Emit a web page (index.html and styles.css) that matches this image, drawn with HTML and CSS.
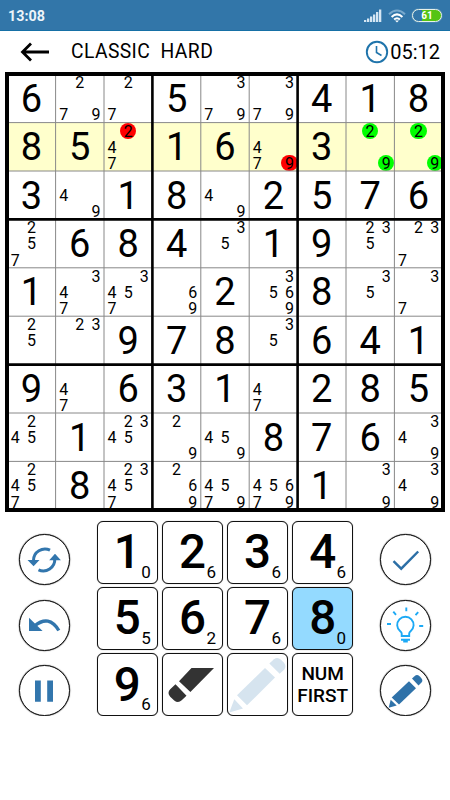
FILE: index.html
```html
<!DOCTYPE html>
<html lang="en">
<head>
  <meta charset="UTF-8">
  <title>Sudoku</title>
  <link rel="stylesheet" href="styles.css">
</head>
<body>
  <div class="status-bar">
    <span>13:08</span>
    <div class="status-icons">
      <svg class="signal" width="18" height="13" viewBox="0 0 18 13" fill="#d5e6f3">
        <path d="M0 11h2.300v2H0zM3 9.500h2.300V13H3zM6 7.500h2.300V13H6zM9 5.500h2.300V13H9zM12 3h2.300v10H12zM15 0.500h2.300V13H15z"/>
      </svg>
      <svg class="wifi" width="18" height="14" viewBox="0 0 18 14" fill="none" stroke-width="2">
        <path d="M1 5.200Q9-2.200 17 5.200" stroke="#79a9cd"/>
        <path d="M3.600 8Q9 2.800 14.400 8" stroke="#fff"/>
        <path d="M6.100 10.600Q9 8 11.900 10.600" stroke="#fff"/>
        <path d="M7 11.500h4L9 13.600z" fill="#fff" stroke="none"/>
      </svg>
      <div class="battery">61</div>
    </div>
  </div>

  <div class="header">
    <svg class="back" width="30" height="20" viewBox="0 0 30 20" fill="none" stroke="#000" stroke-width="2.800">
      <path d="M11 1.500L2.500 10l8.500 8.500M2.500 10H29"/>
    </svg>
    <h1>CLASSIC&nbsp; HARD</h1>
    <div class="timer">
      <svg width="24" height="24" viewBox="0 0 24 24" fill="none" stroke="#1f74ab">
        <circle cx="12" cy="12" r="10.200" stroke-width="1.900"/>
        <path d="M11.500 6v6.500l5 3" stroke-width="1.600"/>
      </svg>
      <span>05:12</span>
    </div>
  </div>

  <div class="board">
    <div class="cells" id="cells"></div>
    <svg class="lines" width="440" height="440" viewBox="0 0 440 440" fill="none" stroke="#000">
      <path stroke="#888" d="M50.600 2v436M99 2v436M195.800 2v436M244.200 2v436M341 2v436M389.400 2v436M2 50.600h436M2 99h436M2 195.800h436M2 244.200h436M2 341h436M2 389.400h436"/>
      <path stroke-width="2.600" d="M147.400 2v436M292.600 2v436M2 147.400h436M2 292.600h436"/>
      <rect x="2" y="2" width="436" height="436" stroke-width="4"/>
    </svg>
  </div>

  <div class="controls">
    <div class="side">
      <button class="round" aria-label="Restart">
        <svg width="50" height="50" viewBox="0 0 50 50">
          <g fill="none" stroke="#3276ad" stroke-width="3">
            <path d="M31 15.200A11.500 11.500 0 0 0 14.500 25.500"/>
            <path d="M19.500 34.800A11.500 11.500 0 0 0 35.800 24"/>
          </g>
          <path fill="#3276ad" d="M8.500 25h12l-5.900 6.200zM30.200 25.200h11.700L36 18.800z"/>
        </svg>
      </button>
      <button class="round" aria-label="Undo">
        <svg width="50" height="50" viewBox="0 0 50 50">
          <path d="M15.500 26Q30 14 39.800 30.500" fill="none" stroke="#3276ad" stroke-width="3.400"/>
          <path fill="#3276ad" d="M10 17.700V31h13.600z"/>
        </svg>
      </button>
      <button class="round" aria-label="Pause">
        <svg width="50" height="50" viewBox="0 0 50 50" fill="#3276ad">
          <path d="M16 14.500h5.800v21.200H16zM28.200 14.500H34v21.200h-5.800z"/>
        </svg>
      </button>
    </div>

    <div class="keypad">
      <button class="key">1<small>0</small></button>
      <button class="key">2<small>6</small></button>
      <button class="key">3<small>6</small></button>
      <button class="key">4<small>6</small></button>
      <button class="key">5<small>5</small></button>
      <button class="key">6<small>2</small></button>
      <button class="key">7<small>6</small></button>
      <button class="key selected">8<small>0</small></button>
      <button class="key">9<small>6</small></button>
      <button class="key" aria-label="Eraser">
        <svg width="61" height="62" viewBox="0 0 61 62" fill="#333">
          <path d="M29.500 14H52L28.400 38 17 27.200zM13.500 30.200l11 11.500-4.800 4.600q-3.500 3.300-7.500.200l-4-3.800q-3.400-3.800 0-7.400z"/>
        </svg>
      </button>
      <button class="key" aria-label="Notes off">
        <svg width="61" height="62" viewBox="0 0 61 62" fill="#d6e4ef">
          <path d="M38 14l10 9.600L20 51.300l-10-10z"/>
          <path d="M42.300 9.600l4.700-4.400q3.500-2.600 7 .500l2.800 2.800q3 3.800.500 7l-4.600 4.300z"/>
          <path d="M7.300 45.300l8.700 9.300-13.700 4z"/>
        </svg>
      </button>
      <button class="key text">NUM<br>FIRST</button>
    </div>

    <div class="side">
      <button class="round" aria-label="Check">
        <svg width="50" height="50" viewBox="0 0 50 50" fill="none" stroke="#2c6fa6" stroke-width="2.400">
          <path d="M13.500 26.200l7.700 7.500 17-17.200"/>
        </svg>
      </button>
      <button class="round" aria-label="Hint">
        <svg width="50" height="50" viewBox="0 0 50 50" fill="none" stroke="#1ca9f5" stroke-width="1.900">
          <path d="M21.700 36v-2.500q0-1-1.500-2.200a8.200 8.200 0 1 1 10.400 0q-1.400 1.200-1.400 2.200V36z"/>
          <path d="M21 39.700h9M23.200 41.600h4.600"/>
          <path d="M26.300 7.500v3.700M13.300 11.700l2.700 3.200M38.200 12.200l-2.700 3M7 24h4M39.200 26h4"/>
        </svg>
      </button>
      <button class="round" aria-label="Notes">
        <svg width="50" height="50" viewBox="0 0 50 50" fill="#2f72a9">
          <path d="M29 15.200l7 7-17 16.300-7.300-7z"/>
          <path d="M32 12.500l2.500-2.300q2.500-2.200 5 0l1.700 1.700q2.200 2.500.300 4.700l-3 2.900z"/>
          <path d="M10.700 33.800l6 5.700-8 2.200z"/>
        </svg>
      </button>
    </div>
  </div>

  <script>
    // "=6" is a filled digit, anything else is a list of pencil marks
    const rows = [
      '=6 279 27 =5 379 379 =4 =1 =8',
      '=8 =5 247 =1 =6 479 =3 29 29',
      '=3 49 =1 =8 49 =2 =5 =7 =6',
      '257 =6 =8 =4 35 =1 =9 235 237',
      '=1 347 3457 69 =2 3569 =8 35 37',
      '25 23 =9 =7 =8 35 =6 =4 =1',
      '=9 47 =6 =3 =1 47 =2 =8 =5',
      '245 =1 2345 29 459 =8 =7 =6 349',
      '2457 =8 23457 269 4579 45679 =1 39 349'
    ];
    const marks = { '1-2-2': 'red', '1-5-9': 'red', '1-7-2': 'green', '1-7-9': 'green', '1-8-2': 'green', '1-8-9': 'green' };
    let html = '';

    rows.forEach((row, r) => {
      row.split(' ').forEach((value, c) => {
        const cls = 'cell' + (r === 1 ? ' active' : '');
        if (value[0] === '=') {
          html += `<div class="${cls}">${value[1]}</div>`;
          return;
        }
        html += `<div class="${cls} notes">`;
        for (let n = 1; n <= 9; n++) {
          const shown = value.includes(n);
          html += `<span class="${marks[`${r}-${c}-${n}`] || ''}">${shown ? n : ''}</span>`;
        }
        html += '</div>';
      });
    });
    document.getElementById('cells').innerHTML = html;
  </script>
</body>
</html>
```
FILE: styles.css
```css
* {
  box-sizing: border-box;
}
body {
  font-family: Roboto, 'Liberation Sans', sans-serif;
  margin: 0;
  background-color: #fff;
  color: #000;
}
.status-bar {
  display: flex;
  justify-content: space-between;
  align-items: center;
  height: 31px;
  padding: 1px 8px 0;
  background-color: #3276a9;
  border-bottom: 1px solid #1670a6;
  color: #edf4fa;
  font-size: 14.3px;
  font-weight: 700;
}
.status-icons {
  display: flex;
  align-items: center;
}
.signal {
  margin-right: 6px;
}
.wifi {
  margin-right: 6px;
}
.battery {
  width: 30px;
  height: 13px;
  border: 1px solid #e8f2e8;
  border-radius: 7px;
  background: linear-gradient(90deg, #3276a9 32%, #55c414 32%);
  box-shadow: 0 0 1px #e8f2e8;
  color: #fff;
  font-size: 10px;
  line-height: 12px;
  text-align: center;
}
.header {
  display: flex;
  align-items: center;
  height: 41px;
  padding: 0 10px 0 20px;
}
.back {
  margin-right: 21px;
}
h1 {
  margin: 0;
  font-size: 19.300px;
  font-weight: 400;
  letter-spacing: 0.400px;
  line-height: 41px;
}
.timer {
  display: flex;
  align-items: center;
  gap: 1px;
  margin-left: auto;
  font-size: 20px;
}
.board {
  position: relative;
  width: 440px;
  height: 440px;
  margin-left: 5px;
  padding: 2.200px;
}
.cells {
  display: grid;
  grid-template-columns: repeat(9, 48.400px);
  grid-template-rows: repeat(9, 48.400px);
}
.cell {
  display: flex;
  justify-content: center;
  align-items: center;
  padding-top: 1px;
  font-size: 38px;
  line-height: 1;
}
.active {
  background-color: #ffffcc;
}
.notes {
  display: grid;
  grid-template-columns: repeat(3, minmax(0, 1fr));
  grid-template-rows: repeat(3, minmax(0, 1fr));
  justify-content: stretch;
  align-items: stretch;
  padding-top: 0;
  font-size: 16px;
}
.notes span {
  line-height: 17px;
  text-align: center;
}
.red, .green {
  border-radius: 50%;
}
.red {
  background-color: #f00;
}
.green {
  background-color: #0f0;
}
.lines {
  position: absolute;
  top: 0;
  left: 0;
}
.controls {
  display: flex;
  justify-content: space-between;
  padding: 9px 19px 0;
}
.side {
  display: flex;
  flex-direction: column;
  gap: 14.500px;
  padding-top: 13px;
}
button {
  padding: 0;
  border: 1px solid #111;
  background-color: #fff;
  box-shadow: 0 0 1px #777;
  color: #000;
  font-family: inherit;
}
.round {
  width: 51px;
  height: 51px;
  border-radius: 50%;
  box-shadow: 0 0 1px 0.300px #555;
}
.round svg {
  display: block;
  margin: -0.700px;
}
.keypad {
  display: grid;
  grid-template-columns: repeat(4, 61px);
  grid-template-rows: repeat(3, 62.500px);
  gap: 3.700px 4.100px;
}
.key {
  position: relative;
  border-radius: 6px;
  font-size: 47.500px;
  font-weight: 500;
  line-height: 60px;
}
.key small {
  position: absolute;
  right: 6px;
  bottom: 1px;
  font-size: 17px;
  font-weight: 400;
  line-height: 20px;
}
.key svg {
  display: block;
  margin: -1px;
}
.selected {
  background-color: #94daff;
}
.text {
  font-size: 19px;
  line-height: 22px;
}
```
